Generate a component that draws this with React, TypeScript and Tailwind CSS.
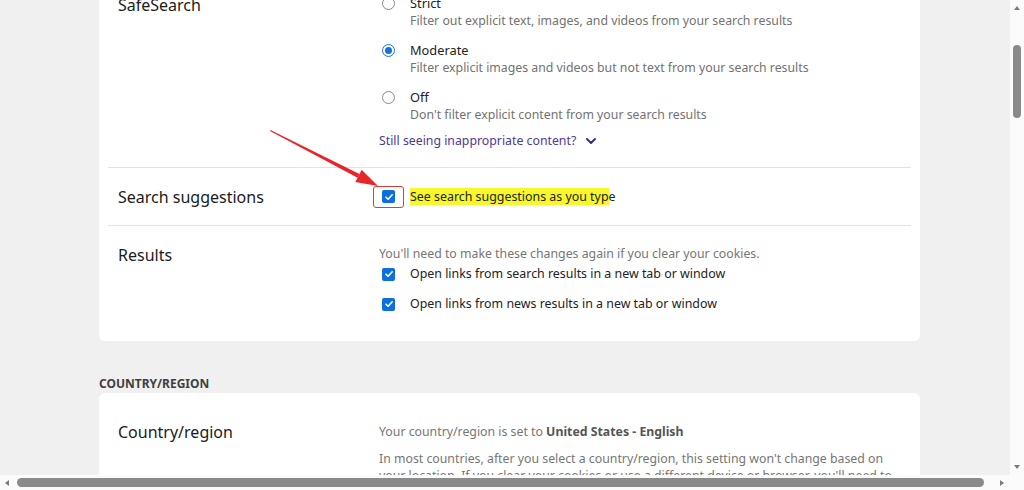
import React from "react";

function Radio({ checked }: { checked?: boolean }) {
    if (checked) {
        return (
            <span className="mt-[3px] flex h-[13px] w-[13px] shrink-0 items-center justify-center rounded-full border-[1.5px] border-[#1a6fe0] bg-white">
                <span className="h-[7px] w-[7px] rounded-full bg-[#1a6fe0]" />
            </span>
        );
    }
    return <span className="mt-[3px] h-[13px] w-[13px] shrink-0 rounded-full border border-[#8a8a8a] bg-white" />;
}

function Checkbox() {
    return (
        <span className="flex h-[13px] w-[13px] shrink-0 items-center justify-center rounded-[2px] bg-[#0b6fe0]">
            <svg width="10" height="10" viewBox="0 0 10 10">
                <path d="M2 5.2 L4.1 7.3 L8.2 2.8" fill="none" stroke="white" strokeWidth="1.6" strokeLinecap="round" strokeLinejoin="round" />
            </svg>
        </span>
    );
}

function Option({ label, desc, checked }: { label: string; desc: string; checked?: boolean }) {
    return (
        <div className="flex gap-[15px]">
            <Radio checked={checked} />
            <div className="flex flex-col">
                <span className="text-[12.8px] leading-[18px] text-[#222]">{label}</span>
                <span className="text-[12.3px] leading-[18px] text-[#727272]">{desc}</span>
            </div>
        </div>
    );
}

export default function App() {
    return (
        <div className="relative flex h-[490px] w-[1024px] flex-col overflow-hidden bg-[#f0f0f0] font-['Noto_Sans',sans-serif]">
            <div className="flex h-[475px]">
                <div className="flex-1 overflow-hidden pl-[99px]">
                    {/* settings card */}
                    <div className="mt-[-40px] w-[821px] rounded-md bg-white px-[9px]">
                        <div className="flex pt-[34px] pb-[17px]">
                            <div className="w-[272px] pl-[10px] text-[16px] leading-[22px] text-[#1b1b1b]">SafeSearch</div>
                            <div className="flex flex-col">
                                <div className="flex flex-col gap-[11px] pl-[2px]">
                                    <Option label="Strict" desc="Filter out explicit text, images, and videos from your search results" />
                                    <Option label="Moderate" desc="Filter explicit images and videos but not text from your search results" checked />
                                    <Option label="Off" desc="Don't filter explicit content from your search results" />
                                </div>
                                <div className="mt-[8px] ml-[-1px] flex items-center gap-[9px] text-[12.3px] leading-[18px] text-[#4d3a96]">
                                    <span>Still seeing inappropriate content?</span>
                                    <svg width="12" height="8" viewBox="0 0 12 8">
                                        <path d="M2 2 L6 6 L10 2" fill="none" stroke="#3c2c80" strokeWidth="2" strokeLinecap="round" strokeLinejoin="round" />
                                    </svg>
                                </div>
                            </div>
                        </div>
                        <div className="h-px bg-[#e3e3e3]" />
                        <div className="flex h-[57px] items-center">
                            <div className="w-[272px] pl-[10px] text-[16px] leading-[22px] text-[#1b1b1b]">Search suggestions</div>
                            <div className="ml-[-7px] flex items-center">
                                <span className="flex h-[22px] w-[31px] items-center justify-center rounded-[3px] border-[1.5px] border-[#e03a3a]">
                                    <Checkbox />
                                </span>
                                <span className="ml-[6px] text-[12.4px] leading-[18px] text-[#222]">
                                    <span className="bg-[#f7f72a]">See search suggestions as you typ</span>e
                                </span>
                            </div>
                        </div>
                        <div className="h-px bg-[#e3e3e3]" />
                        <div className="flex pt-[18px] pb-[27px]">
                            <div className="w-[272px] pl-[10px] text-[16px] leading-[22px] text-[#1b1b1b]">Results</div>
                            <div className="ml-[-1px] flex flex-col">
                                <span className="mt-[1px] text-[12.3px] leading-[18px] text-[#767676]">You'll need to make these changes again if you clear your cookies.</span>
                                <div className="mt-[1px] flex h-[20px] items-center gap-[15px] pl-[3px] text-[12.4px] text-[#222]">
                                    <Checkbox />
                                    <span>Open links from search results in a new tab or window</span>
                                </div>
                                <div className="mt-[10px] flex h-[20px] items-center gap-[15px] pl-[3px] text-[12.4px] text-[#222]">
                                    <Checkbox />
                                    <span>Open links from news results in a new tab or window</span>
                                </div>
                            </div>
                        </div>
                    </div>

                    <div className="mt-[35px] mb-[1px] text-[12px] leading-[16px] font-bold text-[#3f3f3f]">COUNTRY/REGION</div>

                    {/* country card */}
                    <div className="w-[821px] rounded-md bg-white px-[9px] pt-[28px]">
                        <div className="flex">
                            <div className="w-[271px] pl-[10px] text-[16px] leading-[22px] text-[#1b1b1b]">Country/region</div>
                            <div className="flex w-[515px] flex-col pt-[2px] text-[12.3px] leading-[17px] text-[#767676]">
                                <p>
                                    Your country/region is set to <span className="font-bold text-[#555]">United States - English</span>
                                </p>
                                <p className="mt-[10px]">
                                    In most countries, after you select a country/region, this setting won't change based on your location. If you clear your cookies or use a different device or browser, you'll need to
                                </p>
                            </div>
                        </div>
                    </div>
                </div>

                {/* vertical scrollbar */}
                <div className="flex w-[14px] flex-col items-center bg-[#fbfbfb]">
                    <svg className="mt-[5px]" width="8" height="6" viewBox="0 0 8 6">
                        <path d="M4 1 L7 5 L1 5 Z" fill="#7a7a7a" />
                    </svg>
                    <div className="mt-[34px] h-[73px] w-[8px] rounded-full bg-[#8a8a8a]" />
                    <div className="flex-1" />
                    <svg className="mb-[5px]" width="8" height="6" viewBox="0 0 8 6">
                        <path d="M1 1 L7 1 L4 5 Z" fill="#7a7a7a" />
                    </svg>
                </div>
            </div>

            {/* horizontal scrollbar */}
            <div className="flex h-[15px] items-center bg-[#fbfbfb] px-[4px]">
                <svg width="6" height="8" viewBox="0 0 6 8">
                    <path d="M1 4 L5 1 L5 7 Z" fill="#7a7a7a" />
                </svg>
                <div className="ml-[7px] h-[9px] w-[967px] rounded-full bg-[#8a8a8a]" />
                <div className="flex-1" />
                <svg className="mr-[15px]" width="6" height="8" viewBox="0 0 6 8">
                    <path d="M1 1 L5 4 L1 7 Z" fill="#7a7a7a" />
                </svg>
            </div>

            {/* annotation arrow */}
            <svg className="pointer-events-none absolute left-0 top-0" width="1024" height="490">
                <polygon points="270,131 270.5,130 359.4,174.1 357.6,177.7" fill="#e8262a" />
                <polygon points="378,186 355.3,182.1 361.7,169.7" fill="#e8262a" />
            </svg>
        </div>
    );
}
